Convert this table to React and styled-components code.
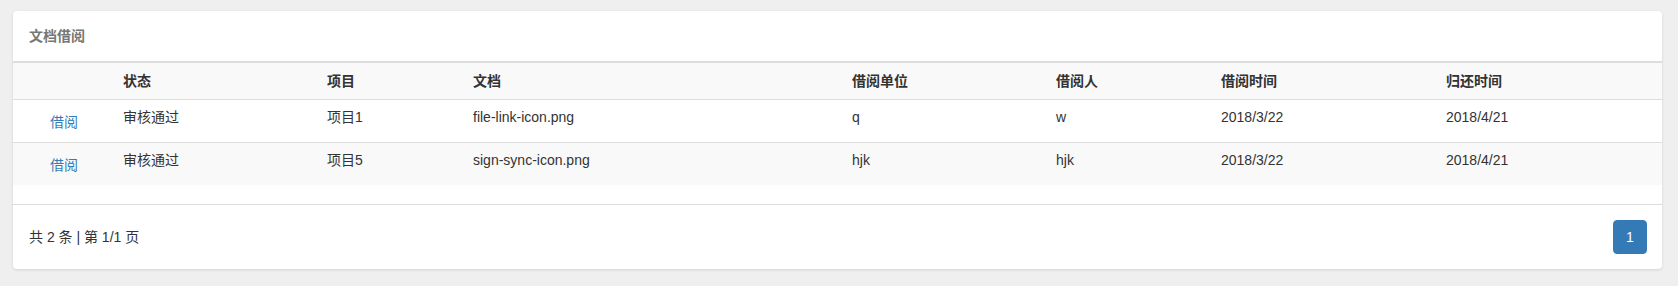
import React from "react";
import styled, { createGlobalStyle } from "styled-components";

const columns = [
  { key: "action", title: "", width: 102 },
  { key: "status", title: "状态", width: 204 },
  { key: "project", title: "项目", width: 146 },
  { key: "doc", title: "文档", width: 379 },
  { key: "unit", title: "借阅单位", width: 204 },
  { key: "person", title: "借阅人", width: 165 },
  { key: "borrowDate", title: "借阅时间", width: 225 },
  { key: "returnDate", title: "归还时间", width: 224 },
];

const rows = [
  {
    status: "审核通过",
    project: "项目1",
    doc: "file-link-icon.png",
    unit: "q",
    person: "w",
    borrowDate: "2018/3/22",
    returnDate: "2018/4/21",
  },
  {
    status: "审核通过",
    project: "项目5",
    doc: "sign-sync-icon.png",
    unit: "hjk",
    person: "hjk",
    borrowDate: "2018/3/22",
    returnDate: "2018/4/21",
  },
];

function App() {
  return (
    <Page>
      <GlobalStyle />
      <Panel>
        <Heading>
          <Title>文档借阅</Title>
        </Heading>
        <Body>
          <Table>
            <colgroup>
              {columns.map((col) => (
                <col key={col.key} style={{ width: col.width }} />
              ))}
            </colgroup>
            <thead>
              <tr>
                {columns.map((col) => (
                  <Th key={col.key}>{col.title}</Th>
                ))}
              </tr>
            </thead>
            <tbody>
              {rows.map((row, index) => (
                <Row key={index} $striped={index % 2 === 1} $divided={index > 0}>
                  <ActionCell>
                    <Link href="#">借阅</Link>
                  </ActionCell>
                  {columns.slice(1).map((col) => (
                    <Td key={col.key}>{row[col.key]}</Td>
                  ))}
                </Row>
              ))}
            </tbody>
          </Table>
        </Body>
        <Footer>
          <Summary>共 2 条 | 第 1/1 页</Summary>
          <Pagination>
            <PageButton $active>1</PageButton>
          </Pagination>
        </Footer>
      </Panel>
    </Page>
  );
}

export default App;

const GlobalStyle = createGlobalStyle`
  html, body {
    margin: 0;
    padding: 0;
    background: #efefef;
  }
  body {
    font-family: "Liberation Sans", "Noto Sans CJK SC", sans-serif;
    font-size: 14px;
    line-height: 20px;
    color: #333;
  }
`;

const Page = styled.div`
  padding: 11px 16px 10px 13px;
`;

const Panel = styled.div`
  background: #fff;
  border-radius: 4px;
  box-shadow: 0 1px 3px rgba(0, 0, 0, 0.12);
  overflow: hidden;
`;

const Heading = styled.div`
  height: 50px;
  padding: 0 16px;
  display: flex;
  align-items: center;
`;

const Title = styled.h3`
  margin: 0;
  font-size: 14px;
  font-weight: bold;
  color: #777;
`;

const Body = styled.div`
  padding-bottom: 19px;
`;

const Table = styled.table`
  width: 100%;
  table-layout: fixed;
  border-collapse: collapse;
  border-top: 2px solid #ddd;
`;

const Th = styled.th`
  height: 36px;
  padding: 0 8px;
  text-align: left;
  font-weight: bold;
  color: #333;
  background: #f9f9f9;
  border-bottom: 1px solid #ddd;
  white-space: nowrap;
`;

const Row = styled.tr`
  background: ${(props) => (props.$striped ? "#f9f9f9" : "#fff")};
  border-top: ${(props) => (props.$divided ? "1px solid #ddd" : "0")};
`;

const Td = styled.td`
  height: 42px;
  box-sizing: border-box;
  padding: 7px 8px 15px;
  text-align: left;
  color: #333;
  white-space: nowrap;
`;

const ActionCell = styled(Td)`
  text-align: center;
  padding-top: 12px;
  padding-bottom: 10px;
`;

const Link = styled.a`
  color: #337ab7;
  text-decoration: none;
`;

const Footer = styled.div`
  height: 64px;
  border-top: 1px solid #ddd;
  padding: 0 15px 0 16px;
  display: flex;
  align-items: center;
  justify-content: space-between;
`;

const Summary = styled.span`
  color: #333;
`;

const Pagination = styled.div`
  display: flex;
  gap: 4px;
`;

const PageButton = styled.button`
  width: 34px;
  height: 34px;
  padding: 0;
  border: 1px solid ${(props) => (props.$active ? "#337ab7" : "#ddd")};
  border-radius: 4px;
  background: ${(props) => (props.$active ? "#337ab7" : "#fff")};
  color: ${(props) => (props.$active ? "#fff" : "#337ab7")};
  font-family: "Liberation Sans", sans-serif;
  font-size: 14px;
  cursor: pointer;
`;
